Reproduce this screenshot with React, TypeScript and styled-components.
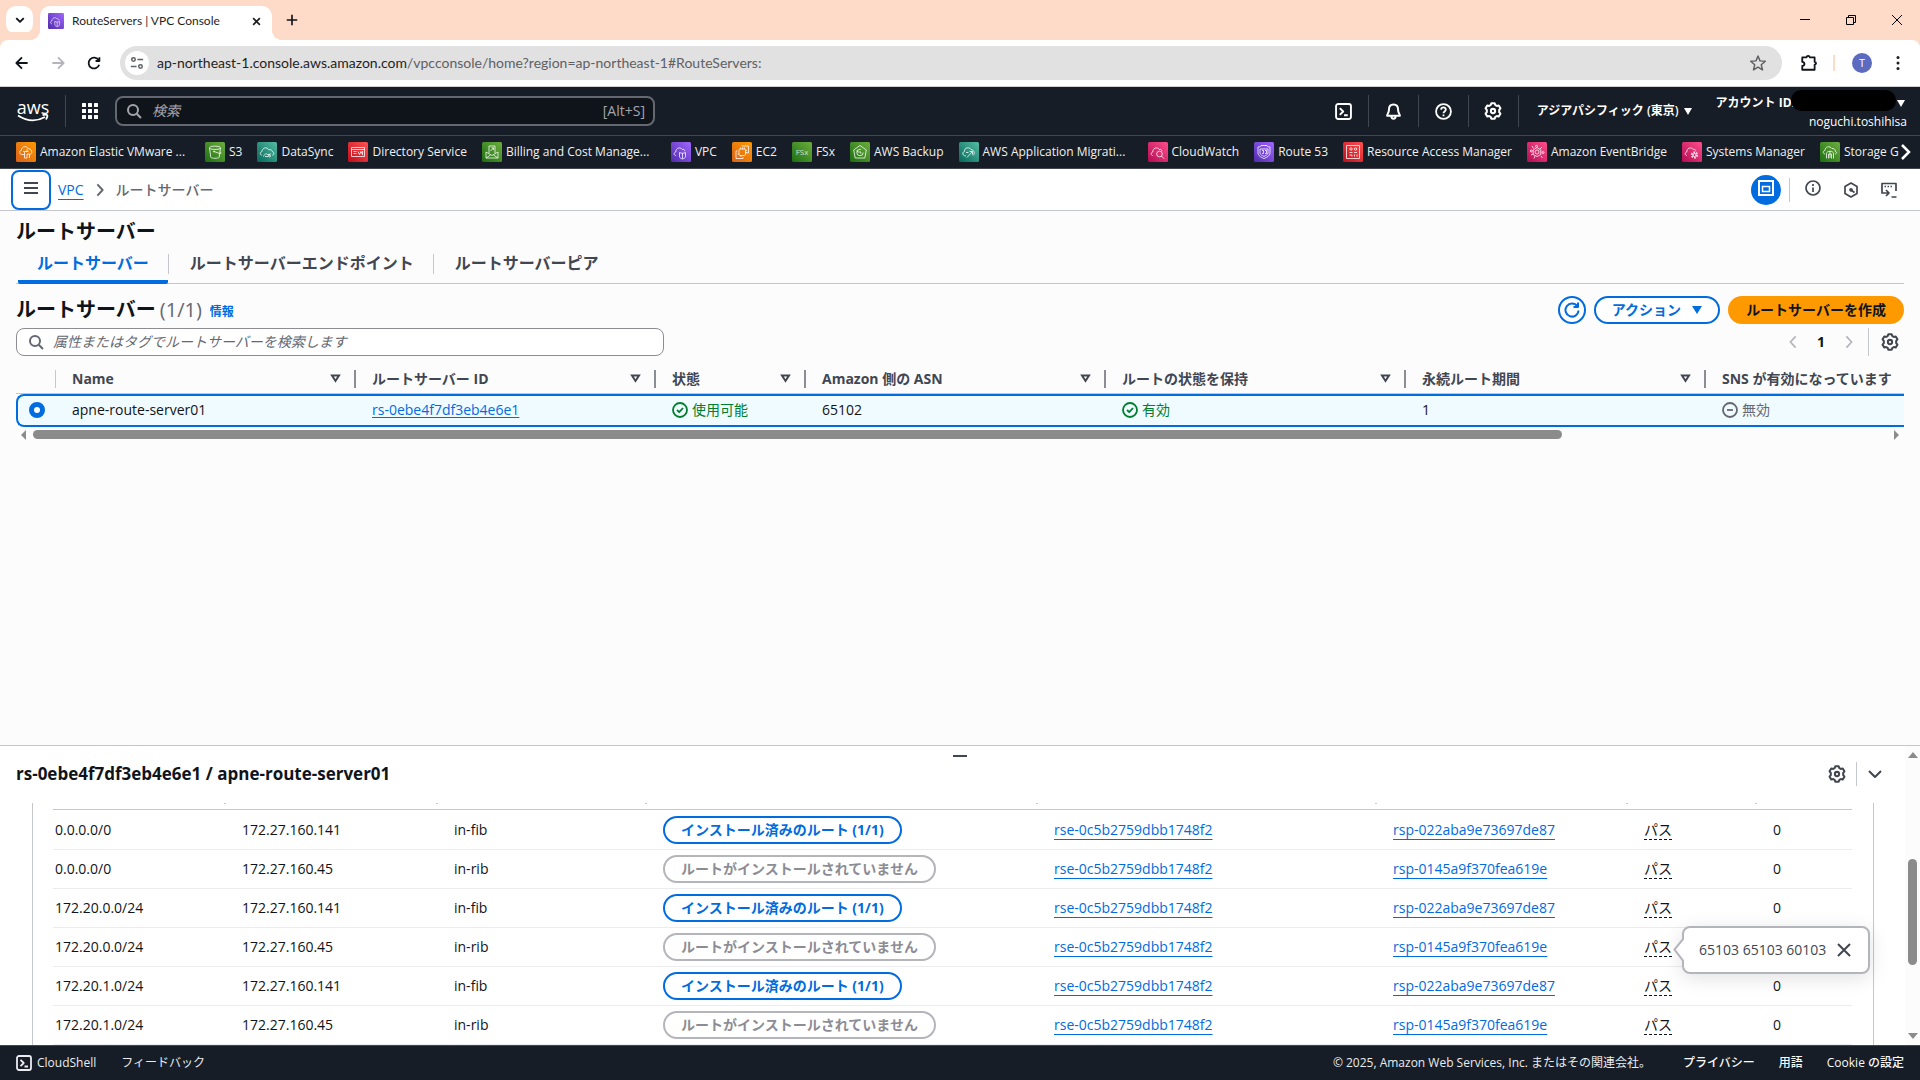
import React from 'react';
import styled, { createGlobalStyle, css } from 'styled-components';

const blue = '#006ce0';
const ink = '#0f141a';
const slate = '#424650';
const muted = '#656871';
const line = '#c6c6cd';
const night = '#161d26';

const GlobalStyle = createGlobalStyle`
  * { box-sizing: border-box; }
  body {
    margin: 0;
    color: ${ink};
    font-family: "Open Sans", "Noto Sans CJK JP", sans-serif;
    font-size: 14px;
    line-height: 20px;
    overflow: hidden;
  }
  button, input { font: inherit; color: inherit; }
  button { cursor: pointer; }
  svg { display: block; flex: none; }
`;

const Page = styled.div`
  display: flex;
  flex-direction: column;
  height: 100vh;
  background: #fcfcfd;
`;

const PlainButton = styled.button`
  display: flex;
  align-items: center;
  justify-content: center;
  flex: none;
  padding: 0;
  border: 0;
  background: none;
`;

const Subtle = styled(PlainButton)`color: ${slate};`;
const Dim = styled(PlainButton)`color: #b4b4bb;`;

/* ---------- browser window ---------- */

const TabStrip = styled.div`
  display: flex;
  align-items: flex-end;
  height: 40px;
  padding-left: 6px;
  background: #fddbc8;
  font-family: Lato, "Open Sans", sans-serif;
`;

const TabSearch = styled(PlainButton)`
  width: 27px;
  height: 28px;
  margin: 0 7px 6px 0;
  border-radius: 10px;
  background: #fff;
`;

const BrowserTab = styled.div`
  position: relative;
  display: flex;
  align-items: center;
  gap: 8px;
  width: 232px;
  height: 34px;
  padding: 0 11px 4px 8px;
  border-radius: 10px 10px 0 0;
  background: #fff;
  font-size: 12px;
  line-height: 16px;
  color: #1f1f1f;
  &::before, &::after {
    content: "";
    position: absolute;
    bottom: 0;
    width: 10px;
    height: 10px;
  }
  &::before { right: 100%; background: radial-gradient(circle at 0 0, transparent 10px, #fff 10px); }
  &::after { left: 100%; background: radial-gradient(circle at 100% 0, transparent 10px, #fff 10px); }
`;

const TabTitle = styled.span`flex: 1;`;

const NewTab = styled(PlainButton)`
  width: 28px;
  height: 28px;
  margin: 0 0 6px 6px;
`;

const WindowButtons = styled.div`
  display: flex;
  align-self: stretch;
  margin-left: auto;
`;

const WindowButton = styled(PlainButton)`width: 46px;`;

const Toolbar = styled.div`
  display: flex;
  align-items: center;
  flex: none;
  height: 47px;
  padding: 0 20px 1px 13px;
  border-bottom: 1px solid #cfd0d1;
  border-radius: 8px 8px 0 0;
  background: #fff;
  box-shadow: 0 -8px 0 #fddbc8;
`;

const NavButtons = styled.div`
  display: flex;
  gap: 18px;
  margin-right: 17px;
`;

const Address = styled.div`
  display: flex;
  align-items: center;
  flex: 1;
  height: 34px;
  padding: 0 15px 0 5px;
  border-radius: 17px;
  background: #e1e1e1;
  font-family: Lato, "Open Sans", sans-serif;
  font-size: 14px;
  color: #5f6063;
  b { font-weight: 400; color: #1f1f1f; }
`;

const SiteInfo = styled(PlainButton)`
  width: 24px;
  height: 24px;
  margin-right: 8px;
  border-radius: 50%;
  background: #fff;
`;

const Url = styled.span`flex: 1;`;

const ToolbarEnd = styled.div`
  display: flex;
  align-items: center;
  padding-left: 18px;
`;

const PeachRule = styled.span`
  width: 2px;
  height: 16px;
  margin: 0 17px 0 15px;
  background: #fddbc8;
`;

const Avatar = styled(PlainButton)`
  width: 20px;
  height: 20px;
  margin-right: 24px;
  border-radius: 50%;
  background: #5c6bc0;
  color: #fff;
  font-size: 11px;
  line-height: 20px;
`;

/* ---------- AWS header ---------- */

const Header = styled.header`
  flex: none;
  background: ${night};
  color: #fff;
  font-size: 12px;
  line-height: 18px;
  font-weight: 500;
`;

const HeaderTop = styled.div`
  display: flex;
  align-items: center;
  height: 48px;
  padding: 0 13px 0 17px;
`;

const Logo = styled.a`
  display: flex;
  flex-direction: column;
  align-items: center;
  width: 32px;
  margin-right: 16px;
  color: #fff;
  font-size: 18px;
  line-height: 14px;
  text-decoration: none;
`;

const HeaderRule = styled.span`
  flex: none;
  width: 1px;
  height: 32px;
  background: ${slate};
`;

const AppsButton = styled(PlainButton)`
  width: 49px;
  height: 32px;
  padding-right: 2px;
`;

const HeaderSearch = styled.label`
  display: flex;
  align-items: center;
  gap: 10px;
  width: 540px;
  height: 30px;
  padding: 0 8px 0 9px;
  border: 2px solid ${muted};
  border-radius: 8px;
  background: ${ink};
  font-size: 14px;
  font-weight: 400;
  color: #a4a4ad;
`;

const SearchInput = styled.input`
  flex: 1;
  min-width: 0;
  padding: 0;
  border: 0;
  outline: 0;
  background: transparent;
  &::placeholder { color: currentColor; opacity: 1; font-style: italic; }
`;

const HeaderEnd = styled.div`
  display: flex;
  align-items: center;
  margin-left: auto;
`;

const HeaderIcon = styled(PlainButton)`
  width: 49px;
  height: 32px;
`;

const Region = styled(PlainButton)`
  gap: 5px;
  margin: 0 24px 0 18px;
  font-weight: 600;
`;

const Account = styled.div`
  display: flex;
  flex-direction: column;
  align-items: flex-end;
  align-self: stretch;
  padding-top: 2px;
`;

const AccountLine = styled(PlainButton)`
  height: 20px;
  font-weight: 700;
  padding-right: 2px;
`;

const Redaction = styled.span`
  width: 105px;
  height: 21px;
  margin: -6px 0 0 -4px;
  border-radius: 10px;
  background: #000;
`;

const Caret = styled.span<{ $gap?: number }>`
  width: 0;
  height: 0;
  margin-left: ${p => p.$gap ?? 0}px;
  border: 4px solid transparent;
  border-top: 7px solid currentColor;
  border-bottom: 0;
`;

const BigCaret = styled.span`
  width: 0;
  height: 0;
  margin-left: 11px;
  border: 5px solid transparent;
  border-top: 8px solid currentColor;
  border-bottom: 0;
`;

const Favorites = styled.nav`
  display: flex;
  align-items: center;
  height: 34px;
  padding: 0 9px 0 16px;
  border: 1px solid ${slate};
  border-width: 1px 0;
`;

const FavoriteList = styled.div`
  display: flex;
  flex: 1;
  gap: 15px;
  min-width: 0;
  overflow: hidden;
`;

const Favorite = styled.a<{ $long?: boolean }>`
  display: flex;
  flex: none;
  align-items: center;
  gap: 4px;
  height: 20px;
  color: #f0f1f2;
  text-decoration: none;
  white-space: nowrap;
  ${p => p.$long && css`width: 174px;`}
`;

/* ---------- page ---------- */

const CrumbBar = styled.div`
  display: flex;
  align-items: center;
  flex: none;
  height: 42px;
  padding: 0 23px 0 11px;
  border-bottom: 1px solid ${line};
  background: #fff;
`;

const MenuButton = styled(PlainButton)`
  width: 40px;
  height: 40px;
  margin-right: 7px;
  padding-bottom: 3px;
  border: 2px solid ${blue};
  border-radius: 8px;
`;

const Crumbs = styled.div`
  display: flex;
  align-items: center;
  gap: 9px;
  color: ${muted};
  font-weight: 500;
`;

const Link = styled.a`
  color: ${blue};
  font-weight: 400;
  text-decoration: underline;
  text-underline-offset: 4px;
  text-decoration-thickness: 1px;
  text-decoration-skip-ink: none;
`;

const TightLink = styled(Link)`text-underline-offset: 2px;`;

const ToolIcons = styled.div`
  display: flex;
  align-items: center;
  margin-left: auto;
  gap: 22px;
  color: ${slate};
`;

const InfoButton = styled(PlainButton)`padding-bottom: 3px;`;

const RoundToggle = styled(PlainButton)`
  width: 30px;
  height: 30px;
  padding-bottom: 3px;
  border-radius: 50%;
  background: ${blue};
`;

const Rule = styled.span<{ $h: number }>`
  width: 1px;
  height: ${p => p.$h}px;
  background: ${line};
`;

const ToggleGroup = styled.div`
  display: flex;
  align-items: center;
  gap: 8px;
  margin-right: -7px;
`;

const Main = styled.main`
  flex: 1;
  min-height: 0;
  padding: 9px 16px 0;
`;

const Title = styled.h1`
  margin: 0;
  font-size: 20px;
  line-height: 24px;
  font-weight: 700;
`;

const Tabs = styled.div`
  display: flex;
  align-items: center;
  height: 40px;
  border-bottom: 1px solid ${line};
`;

const Tab = styled.button<{ $active?: boolean }>`
  height: 40px;
  margin-left: 2px;
  padding: 3px 19px 0;
  border: 0;
  border-bottom: 4px solid ${p => (p.$active ? blue : 'transparent')};
  border-radius: 2px;
  background: none;
  font-size: 16px;
  font-weight: 700;
  color: ${p => (p.$active ? blue : slate)};
`;

const ListHeader = styled.div`
  display: flex;
  align-items: center;
  gap: 8px;
  height: 28px;
  margin-top: 12px;
`;

const Heading = styled.h2`
  margin: 0;
  font-size: 20px;
  line-height: 24px;
  font-weight: 700;
  span { font-weight: 400; color: ${muted}; margin-left: 4px; }
`;

const InfoLink = styled.a`
  flex: 1;
  padding-top: 4px;
  color: ${blue};
  font-size: 12px;
  font-weight: 700;
  text-decoration: none;
`;

const Pill = styled.button<{ $kind?: 'primary' | 'icon' }>`
  display: inline-flex;
  align-items: center;
  justify-content: center;
  height: 28px;
  padding: 0 16px;
  border: 2px solid ${blue};
  border-radius: 14px;
  background: #fff;
  color: ${blue};
  font-weight: 700;
  white-space: nowrap;
  &:disabled { border-color: #b4b4bb; color: #8c8c94; }
  ${p => p.$kind === 'primary' && css`border-color: #ff9900; background: #ff9900; color: ${ink};`}
  ${p => p.$kind === 'icon' && css`width: 28px; padding: 0;`}
`;

const FilterRow = styled.div`
  display: flex;
  align-items: center;
  justify-content: space-between;
  margin-top: 4px;
`;

const Filter = styled.label`
  display: flex;
  align-items: center;
  gap: 9px;
  width: 648px;
  height: 28px;
  padding: 0 11px;
  border: 1px solid #8c8c94;
  border-radius: 8px;
  background: #fff;
  color: ${muted};
`;

const Pager = styled.div`
  display: flex;
  align-items: center;
  gap: 12px;
  padding-right: 5px;
`;

const PageNumbers = styled.div`
  display: flex;
  align-items: center;
  gap: 17px;
  font-weight: 700;
`;

const TableFrame = styled.div`
  margin-top: 8px;
  overflow: hidden;
`;

const ServerTable = styled.table`
  width: 100%;
  min-width: 1888px;
  border-spacing: 0;
  table-layout: fixed;
  text-align: left;
  th {
    height: 30px;
    padding: 0;
    border-bottom: 1px solid ${line};
    color: ${slate};
    font-weight: 700;
  }
  td {
    height: 33px;
    padding: 0 0 1px 16px;
    border: 2px solid ${blue};
    border-width: 2px 0;
    background: #f0fbff;
  }
  td:first-child {
    padding-left: 11px;
    border-left-width: 2px;
    border-radius: 8px 0 0 8px;
  }
`;

const HeadCell = styled.div<{ $first?: boolean; $last?: boolean }>`
  display: flex;
  align-items: center;
  justify-content: space-between;
  height: 18px;
  padding: 0 13px 0 16px;
  border-right: 2px solid #8c8c94;
  white-space: nowrap;
  ${p => p.$first && css`border-right: 1px solid ${line};`}
  ${p => p.$last && css`border-right: 0;`}
`;

const Radio = styled.input`
  appearance: none;
  display: block;
  width: 16px;
  height: 16px;
  margin: 0;
  border: 5px solid ${blue};
  border-radius: 50%;
  background: #fff;
`;

const Status = styled.span<{ $off?: boolean }>`
  display: flex;
  align-items: center;
  gap: 4px;
  color: ${p => (p.$off ? muted : '#00802f')};
`;

const HScroll = styled.div`
  display: flex;
  align-items: center;
  height: 15px;
  padding: 0 5px;
  color: #8b8b8b;
`;

const HTrack = styled.div`
  flex: 1;
  margin: 0 8px 0 7px;
`;

const HThumb = styled.div`
  width: 82.5%;
  height: 9px;
  border-radius: 5px;
  background: #8b8b8b;
`;

/* ---------- split panel ---------- */

const Panel = styled.section`
  display: flex;
  flex: none;
  height: 300px;
  border-top: 1px solid #c6c6c6;
  background: #fff;
`;

const PanelMain = styled.div`
  display: flex;
  flex-direction: column;
  flex: 1;
  min-width: 0;
`;

const PanelHead = styled.div`
  display: grid;
  grid-template-rows: 9px 2px 46px;
  justify-items: center;
  flex: none;
  height: 57px;
`;

const Grip = styled.span`
  grid-row: 2;
  width: 14px;
  height: 2px;
  margin-left: 15px;
  background: ${slate};
`;

const PanelTitleRow = styled.div`
  grid-row: 3;
  justify-self: stretch;
  display: flex;
  align-items: center;
  justify-content: space-between;
  height: 34px;
  padding: 0 22px 0 16px;
`;

const PanelTitle = styled.h2`
  margin: 0;
  font-size: 17px;
  line-height: 24px;
  font-weight: 700;
`;

const PanelTools = styled.div`
  display: flex;
  align-items: center;
  gap: 10px;
`;

const PanelBody = styled.div`
  flex: 1;
  min-height: 0;
  margin: 0 31px 0 32px;
  padding: 0 21px 0 20px;
  border: 1px solid ${line};
  border-width: 0 1px;
`;

const RouteTable = styled.table`
  width: 100%;
  border-spacing: 0;
  table-layout: fixed;
  text-align: left;
  th {
    height: 7px;
    padding: 0;
    border-bottom: 1px solid ${line};
  }
  td {
    height: 39px;
    padding: 0 0 0 16px;
    border-bottom: 1px solid #ebebf0;
    white-space: nowrap;
  }
  td:first-child { padding-left: 2px; }
  tbody tr:first-child td { height: 40px; }
`;

const Tick = styled.div`
  height: 1px;
  margin-bottom: 5px;
  border-right: 2px solid ${line};
`;

const PathCell = styled.div`
  position: relative;
  display: inline-block;
`;

const PathButton = styled.button`
  padding: 0;
  border: 0;
  border-bottom: 1px dashed ${ink};
  background: none;
  line-height: 18px;
  display: block;
`;

const Popover = styled.div`
  position: absolute;
  z-index: 2;
  left: 38px;
  top: -12px;
  display: flex;
  align-items: center;
  justify-content: space-between;
  width: 188px;
  height: 48px;
  padding: 0 16px 0 15px;
  border: 2px solid #b4b4bb;
  border-radius: 8px;
  background: #fff;
  color: ${slate};
  box-shadow: 0 4px 20px rgba(0, 7, 22, 0.12);
`;

const PopoverArrow = styled.svg`
  position: absolute;
  left: -11px;
  top: 9px;
`;

const VScroll = styled.div`
  display: flex;
  flex-direction: column;
  align-items: center;
  justify-content: space-between;
  flex: none;
  width: 15px;
  padding: 6px 0;
  background: #fcfcfc;
  color: #8b8b8b;
`;

const VTrack = styled.div`
  flex: 1;
  padding-top: 101px;
`;

const VThumb = styled.div`
  width: 9px;
  height: 106px;
  border-radius: 5px;
  background: #8b8b8b;
`;

const Footer = styled.footer`
  display: flex;
  align-items: center;
  flex: none;
  height: 35px;
  padding: 0 16px;
  border-top: 1px solid ${slate};
  background: ${night};
  color: #ebebf0;
  font-size: 12px;
  a { color: #f9f9fa; text-decoration: none; font-weight: 500; margin-left: 24px; }
`;

const ShellButton = styled(PlainButton)`
  gap: 5px;
  margin-right: 25px;
`;

const Copyright = styled.span`margin: 0 8px 0 auto;`;

/* ---------- icons ---------- */

type IconProps = { size?: number; sw?: number; children: React.ReactNode };
const Icon = ({ size = 16, sw = 2, children }: IconProps) => (
  <svg width={size} height={size} viewBox="0 0 16 16" fill="none" stroke="currentColor" strokeWidth={sw} strokeLinejoin="round" aria-hidden="true">
    {children}
  </svg>
);

const Magnifier = () => (
  <Icon><circle cx="7" cy="7" r="5" /><path d="M10.7 10.7 15 15" /></Icon>
);
const Gear = () => (
  <Icon size={18} sw={1.8}>
    <path d="M6.5 1.2h3l.6 1.6 1.300.7 1.700-.4 1.500 2.500-1.100 1.400v2l1.100 1.400-1.500 2.500-1.700-.4-1.300.7-.6 1.600h-3l-.6-1.600-1.300-.7-1.700.4-1.500-2.500L2.500 9V7L1.400 5.600l1.500-2.500 1.700.4 1.300-.7z" />
    <circle cx="8" cy="8" r="1.900" />
  </Icon>
);
const Shell = ({ size = 17 }: { size?: number }) => (
  <Icon size={size} sw={1.8}><rect x="1" y="1" width="14" height="14" rx="2" /><path d="M4.500 4.800 7.700 8l-3.200 3.200M8.500 11.500h3.500" /></Icon>
);
const Check = () => (
  <Icon sw={1.8}><circle cx="8" cy="8" r="7" /><path d="m5 8 2.200 2.200L11 6" /></Icon>
);
const Minus = () => (
  <Icon sw={1.8}><circle cx="8" cy="8" r="7" /><path d="M5 8h6" /></Icon>
);
const chevrons = {
  left: 'M11 1.500 5 8l6 6.500',
  right: 'M5 1.500 11 8l-6 6.500',
  down: 'M2 5l6 6 6-6',
};
const Chevron = ({ dir, size = 16, sw = 2 }: { dir: keyof typeof chevrons; size?: number; sw?: number }) => (
  <Icon size={size} sw={sw}><path d={chevrons[dir]} /></Icon>
);
const SortArrow = () => (
  <svg width="11" height="9" viewBox="0 0 11 9" fill="none" stroke="currentColor" strokeWidth="2" aria-hidden="true"><path d="M2 1.500h7L5.500 7z" /></svg>
);
const Cross = ({ size = 16, sw = 2 }: { size?: number; sw?: number }) => (
  <Icon size={size} sw={sw}><path d="m2 2 12 12M14 2 2 14" /></Icon>
);
const Tri = ({ d, w, h }: { d: string; w: number; h: number }) => (
  <svg width={w} height={h} viewBox="0 0 10 10" preserveAspectRatio="none" fill="currentColor" aria-hidden="true"><path d={d} /></svg>
);

const palettes = {
  orange: ['#d9621b', '#ff9900'],
  green: ['#1e6e13', '#6cae3e'],
  teal: ['#06685a', '#54bca4'],
  red: ['#c00d1c', '#ff5252'],
  purple: ['#4f2cab', '#a166ff'],
  pink: ['#b30b53', '#ff4f8b'],
};
type Palette = keyof typeof palettes;

const cloud = 'M5 13.500H4.600C2.800 13.300 2.600 10.400 4.800 10 4.600 6 9.500 4.500 11.200 7.500c1.500-.8 2.700.4 2.600 1.800';

const glyphs: Record<string, React.ReactNode> = {
  vmware: <><path d="M6 12.500c-3 0-3-4-.5-4.300C5.500 4 11 3.500 12.300 6.800c2.200-.2 3.800 1.600 3.500 3.500-.2 1.300-1 2-2.300 2.200" /><path d="M7 9.500h5.500M8.500 9.500V16M8.500 16h2.500v-4h2.500v4M6 12.500h2.500M11 7v2.500" /></>,
  s3: <><ellipse cx="10" cy="5.800" rx="5.500" ry="1.700" /><path d="m4.500 5.800 1.300 9.500c.8 1.300 7.600 1.300 8.400 0l1.300-9.500M9 9.500l5.500 2c2 .5 2-.8.6-1.600" /><circle cx="9" cy="9.500" r=".6" /></>,
  datasync: <><path d="M4.800 13.200C2.500 12.700 3 9.800 5 9.600 5 5.500 10.200 4.500 11.800 7.800c2-.6 3.500.6 3.700 2 2 .5 1.800 3.200-.3 3.400" /><path d="M6.500 14.500c1-3 3-3 4-2s2 .5 3-.8M11 12.300h2.500M8 14.500h3" /><circle cx="12.500" cy="14" r="1" /></>,
  directory: <><rect x="3.500" y="5.500" width="13" height="9" /><path d="M3.500 7.500h13M5.500 9.500h3M5.500 11.500h3M10 9.500l1.500 3 1.500-3 1.500 3M14.500 9v4" /></>,
  billing: <><path d="M4 10v6h12v-6l-6 3.500zM4 16l4.500-3M16 16l-4.500-3M7 11V4h6v7M8.500 9l3-3M9.500 5.800h2v2" /></>,
  vpc: <><path d={cloud} /><path d="M8.500 10.500c2 1 4 1 6 0v4.200c0 1-1.500 1.800-3 2.300-1.500-.5-3-1.300-3-2.300zM11.500 11.200v5.500" /></>,
  ec2: <><rect x="7" y="7" width="6.500" height="6.500" rx="1" /><path d="M9.500 4h7v7h-2M5.500 9H4v7.500h7V15M8.500 7V5.500M10.500 7V5.500M12.300 7V5.500M13.500 8.500H15M13.500 10.500H15M7 12H5.500M9 13.500V15" /></>,
  fsx: <text x="10" y="13" textAnchor="middle" fontSize="8" fill="#fff" fillOpacity=".75" stroke="none">FSx</text>,
  backup: <><path d="m10 3.500 6.300 4.500-1.500 8H5.200L3.700 8z" /><circle cx="10" cy="10.500" r="3.200" strokeDasharray="16 4" /><path d="M10 9v2h1.500M7 8l.5 2H9" /></>,
  migration: <><path d="M7 14c-4 0-4-4-1.500-4.500C5 5.500 10.500 4.500 12 7.500c3 0 4.500 4 2 6" /><path d="m8 15.500 5.500-6M10.500 9.500h3v3M7 10.500h2.500" /></>,
  watch: <><path d={cloud} /><circle cx="11.500" cy="12" r="2.800" /><path d="m13.500 14 2.500 2.700" /></>,
  route: <><path d="M4 5c2 0 3-.5 3-1.500h6c0 1 1 1.500 3 1.500v6c0 2.500-3 4.500-6 5.500-3-1-6-3-6-5.500z" /><path d="M6 7h8v4c0 1.500-2 2.500-4 3.300C8 13.500 6 12.500 6 11zM8 8.500h1.500v3H8M11 8.500h1.500v3H11" /></>,
  ram: <><rect x="3.500" y="3.500" width="13" height="13" /><circle cx="8" cy="7" r="1.200" /><circle cx="12.500" cy="7" r="1.200" /><path d="M6.500 10.500h3M11 10.500h3M6.500 13h2.500v1.500M11.500 12.500v2M14 12.500v2" /></>,
  bridge: <><circle cx="10" cy="10" r="2" /><path d="M10 5.500 13.800 8v4.500L10 14.500l-3.800-2V8zM5 4l1.500 2.500M15 5l-2 2M4 13l2-1M14 14l1.500 2M8 14l-1 2.500" /><circle cx="9.500" cy="4.300" r="1" /><circle cx="16" cy="10.500" r="1" /><circle cx="4.300" cy="9" r="1" /></>,
  systems: <><path d={cloud} /><circle cx="12.500" cy="13" r="2.600" strokeDasharray="1.700 1" strokeWidth="2" /><circle cx="12.500" cy="13" r="1.500" /></>,
  storage: <><path d="M5 12C2.500 11.500 3 8.800 5 8.500 5 4.500 10 3.500 11.800 6.500c2.200-.4 3.700 1.300 3.500 2.800 1.500.5 1.500 2.200 0 2.700" /><path d="M6.500 16.500v-5c0-3 7-3 7 0v5M8.500 16.500v-4.500h3v4.500M10 9v7" /></>,
};

const ServiceIcon = ({ glyph, tone, size = 20 }: { glyph: string; tone: Palette; size?: number }) => {
  const id = `grad-${glyph}-${size}`;
  return (
    <svg width={size} height={size} viewBox="0 0 20 20" fill="none" stroke="#fff" strokeOpacity=".85" strokeWidth=".9" strokeLinejoin="round" aria-hidden="true">
      <defs>
        <linearGradient id={id} x1="0" y1="1" x2="1" y2="0">
          <stop offset="0" stopColor={palettes[tone][0]} />
          <stop offset="1" stopColor={palettes[tone][1]} />
        </linearGradient>
      </defs>
      <rect width="20" height="20" rx="1.500" fill={`url(#${id})`} stroke="none" />
      {glyphs[glyph]}
    </svg>
  );
};

/* ---------- data ---------- */

const favorites: { name: string; glyph: string; tone: Palette; long?: boolean }[] = [
  { name: 'Amazon Elastic VMware ...', glyph: 'vmware', tone: 'orange', long: true },
  { name: 'S3', glyph: 's3', tone: 'green' },
  { name: 'DataSync', glyph: 'datasync', tone: 'teal' },
  { name: 'Directory Service', glyph: 'directory', tone: 'red' },
  { name: 'Billing and Cost Manage...', glyph: 'billing', tone: 'green', long: true },
  { name: 'VPC', glyph: 'vpc', tone: 'purple' },
  { name: 'EC2', glyph: 'ec2', tone: 'orange' },
  { name: 'FSx', glyph: 'fsx', tone: 'green' },
  { name: 'AWS Backup', glyph: 'backup', tone: 'green' },
  { name: 'AWS Application Migrati...', glyph: 'migration', tone: 'teal', long: true },
  { name: 'CloudWatch', glyph: 'watch', tone: 'pink' },
  { name: 'Route 53', glyph: 'route', tone: 'purple' },
  { name: 'Resource Access Manager', glyph: 'ram', tone: 'red' },
  { name: 'Amazon EventBridge', glyph: 'bridge', tone: 'pink' },
  { name: 'Systems Manager', glyph: 'systems', tone: 'pink' },
  { name: 'Storage G', glyph: 'storage', tone: 'green' },
];

const serverColumns = ['Name', 'ルートサーバー ID', '状態', 'Amazon 側の ASN', 'ルートの状態を保持', '永続ルート期間', 'SNS が有効になっています'];
const serverWidths = [40, 300, 300, 150, 300, 300, 300];

const openPath = 3;
const prefixes = ['0.0.0.0/0', '172.20.0.0/24', '172.20.1.0/24'];
const routes = prefixes.flatMap(prefix => [
  { prefix, hop: '172.27.160.141', state: 'in-fib', installed: true, peer: 'rsp-022aba9e73697de87' },
  { prefix, hop: '172.27.160.45', state: 'in-rib', installed: false, peer: 'rsp-0145a9f370fea619e' },
]);
const routeWidths = [173, 212, 209, 391, 339, 251, 129];

/* ---------- app ---------- */

export default function App() {
  return (
    <Page>
      <GlobalStyle />

      <TabStrip>
        <TabSearch aria-label="タブを検索"><Chevron dir="down" size={10} sw={3} /></TabSearch>
        <BrowserTab>
          <ServiceIcon glyph="vpc" tone="purple" size={16} />
          <TabTitle>RouteServers | VPC Console</TabTitle>
          <PlainButton aria-label="タブを閉じる"><Cross size={9} sw={3} /></PlainButton>
        </BrowserTab>
        <NewTab aria-label="新しいタブ"><Icon size={12} sw={2.2}><path d="M8 1v14M1 8h14" /></Icon></NewTab>
        <WindowButtons>
          <WindowButton aria-label="最小化"><svg width="10" height="10" stroke="#000"><path d="M0 4.500h10" /></svg></WindowButton>
          <WindowButton aria-label="元に戻す"><svg width="10" height="10" stroke="#000" fill="none"><path d="M.5 2.500h7v7h-7zM2.500 2V.5h7v7H8" /></svg></WindowButton>
          <WindowButton aria-label="閉じる"><svg width="10" height="10" stroke="#000"><path d="m0 0 10 10M10 0 0 10" /></svg></WindowButton>
        </WindowButtons>
      </TabStrip>

      <Toolbar>
        <NavButtons>
          <PlainButton aria-label="戻る"><Icon size={18} sw={1.6}><path d="M13 8H3.500M8 3 3 8l5 5" /></Icon></PlainButton>
          <Dim aria-label="進む" disabled><Icon size={18} sw={1.6}><path d="M3 8h9.500M8 3l5 5-5 5" /></Icon></Dim>
          <PlainButton aria-label="再読み込み"><Icon size={18} sw={1.6}><path d="M12.600 9.500A4.800 4.800 0 1 1 12 5.300M12.800 2.800v3.400H9.400" /></Icon></PlainButton>
        </NavButtons>
        <Address>
          <SiteInfo aria-label="サイト情報">
            <Icon size={14} sw={1.7}><circle cx="4" cy="4" r="2" /><path d="M8.500 4H15M1 12h6.500" /><circle cx="12" cy="12" r="2" /></Icon>
          </SiteInfo>
          <Url><b>ap-northeast-1.console.aws.amazon.com</b>/vpcconsole/home?region=ap-northeast-1#RouteServers:</Url>
          <PlainButton aria-label="ブックマーク">
            <Icon size={18} sw={1.3}><path d="m8 1.800 1.800 4.300 4.700.4-3.600 3.100 1.100 4.600L8 11.700l-4 2.500 1.100-4.600L1.500 6.500l4.700-.4z" /></Icon>
          </PlainButton>
        </Address>
        <ToolbarEnd>
          <PlainButton aria-label="拡張機能">
            <Icon size={18} sw={1.6}><path d="M2 3h3.800C6 1.300 8.500 1.300 8.700 3H13v4c1.700.2 1.700 2.300 0 2.500V14H2v-3.400c2.600-.4 2.600-3.200 0-3.600z" /></Icon>
          </PlainButton>
          <PeachRule />
          <Avatar aria-label="プロファイル">T</Avatar>
          <PlainButton aria-label="メニュー">
            <svg width="4" height="16" fill="#1f1f1f"><circle cx="2" cy="2.500" r="1.500" /><circle cx="2" cy="8" r="1.500" /><circle cx="2" cy="13.500" r="1.500" /></svg>
          </PlainButton>
        </ToolbarEnd>
      </Toolbar>

      <Header>
        <HeaderTop>
          <Logo href="#">
            aws
            <svg width="32" height="8" viewBox="0 0 32 8" fill="none" stroke="#fff" strokeWidth="1.800">
              <path d="M1 1.500c9 6 19 6 27 1.500M25.500 1.200c2-.6 4-.5 4.700 0 .4.600 0 2.800-1.400 4.300" />
            </svg>
          </Logo>
          <HeaderRule />
          <AppsButton aria-label="サービス">
            <svg width="16" height="16" fill="#fff">
              {[0, 6, 12].flatMap(x => [0, 6, 12].map(y => <rect key={`${x}-${y}`} x={x} y={y} width="4" height="4" rx=".5" />))}
            </svg>
          </AppsButton>
          <HeaderSearch>
            <Magnifier />
            <SearchInput placeholder="検索" aria-label="検索" />
            [Alt+S]
          </HeaderSearch>
          <HeaderEnd>
            <HeaderIcon aria-label="CloudShell"><Shell /></HeaderIcon>
            <HeaderRule />
            <HeaderIcon aria-label="通知">
              <Icon size={17} sw={1.9}><path d="M8 1.500c-3 0-4.300 2-4.300 4.800 0 3-1.700 4-1.700 5.700h12c0-1.700-1.700-2.700-1.700-5.700C12.300 3.500 11 1.500 8 1.500zM6 12.500c0 3 4 3 4 0" /></Icon>
            </HeaderIcon>
            <HeaderRule />
            <HeaderIcon aria-label="サポート">
              <Icon size={17} sw={1.7}><circle cx="8" cy="8" r="7" /><path d="M5.800 6.300c0-2.800 4.400-2.800 4.400-.1C10.200 8 8 7.900 8 9.600M8 10.800v1.600" /></Icon>
            </HeaderIcon>
            <HeaderRule />
            <HeaderIcon aria-label="設定"><Gear /></HeaderIcon>
            <HeaderRule />
            <Region>アジアパシフィック (東京)<Caret /></Region>
            <Account>
              <AccountLine>アカウント ID:<Redaction /><Caret $gap={1} /></AccountLine>
              noguchi.toshihisa
            </Account>
          </HeaderEnd>
        </HeaderTop>
        <Favorites>
          <FavoriteList>
            {favorites.map(f => (
              <Favorite key={f.name} href="#" $long={f.long}><ServiceIcon glyph={f.glyph} tone={f.tone} />{f.name}</Favorite>
            ))}
          </FavoriteList>
          <PlainButton aria-label="次へ">
            <svg width="11" height="16" fill="none" stroke="#fff" strokeWidth="2.500"><path d="m2 1 7 7-7 7" /></svg>
          </PlainButton>
        </Favorites>
      </Header>

      <CrumbBar>
        <MenuButton aria-label="ナビゲーションを開く">
          <svg width="14" height="14" stroke={slate} strokeWidth="2"><path d="M0 2h14M0 7h14M0 12h14" /></svg>
        </MenuButton>
        <Crumbs>
          <Link href="#">VPC</Link>
          <Chevron dir="right" size={14} sw={2.2} />
          <span>ルートサーバー</span>
        </Crumbs>
        <ToolIcons>
          <ToggleGroup>
            <RoundToggle aria-label="分割パネル">
              <svg width="16" height="16" fill="none" stroke="#fff" strokeWidth="2"><path d="M1 1h14v14H1z" /><path d="M4.500 6.500h7v5h-7z" strokeWidth="1.500" /></svg>
            </RoundToggle>
            <Rule $h={24} />
          </ToggleGroup>
          <InfoButton aria-label="情報"><Icon sw={1.7}><circle cx="8" cy="8" r="7" /><path d="M8 4v2M8 7.500V12" /></Icon></InfoButton>
          <PlainButton aria-label="Amazon Q">
            <Icon sw={1.7}><path d="m8 1 6 3.500v7L8 15l-6-3.500v-7z" /><path d="m8 8 3.500 2.500" /><circle cx="8" cy="7.800" r="1" /></Icon>
          </PlainButton>
          <PlainButton aria-label="ターミナル">
            <Icon sw={1.7}><path d="M15 9V1.500H1V11h6M3.500 4.500h1.500M6.500 4.500H8M9.500 4.500H11M5 8l3 3-3 3M10.500 15h5" /></Icon>
          </PlainButton>
        </ToolIcons>
      </CrumbBar>

      <Main>
        <Title>ルートサーバー</Title>
        <Tabs role="tablist">
          <Tab role="tab" aria-selected $active>ルートサーバー</Tab>
          <Rule $h={20} />
          <Tab role="tab">ルートサーバーエンドポイント</Tab>
          <Rule $h={20} />
          <Tab role="tab">ルートサーバーピア</Tab>
        </Tabs>

        <ListHeader>
          <Heading>ルートサーバー<span>(1/1)</span></Heading>
          <InfoLink href="#">情報</InfoLink>
          <Pill $kind="icon" aria-label="更新"><Icon sw={2}><path d="M14.500 8.500A6.500 6.500 0 1 1 13.300 4.300M14 .5V5H9.500" /></Icon></Pill>
          <Pill>アクション<BigCaret /></Pill>
          <Pill $kind="primary">ルートサーバーを作成</Pill>
        </ListHeader>

        <FilterRow>
          <Filter>
            <Magnifier />
            <SearchInput placeholder="属性またはタグでルートサーバーを検索します" aria-label="ルートサーバーを検索" />
          </Filter>
          <Pager>
            <PageNumbers>
              <Dim aria-label="前のページ" disabled><Chevron dir="left" size={14} /></Dim>
              1
              <Dim aria-label="次のページ" disabled><Chevron dir="right" size={14} /></Dim>
            </PageNumbers>
            <Rule $h={28} />
            <Subtle aria-label="設定"><Gear /></Subtle>
          </Pager>
        </FilterRow>

        <TableFrame>
          <ServerTable>
            <colgroup>{serverWidths.map((w, i) => <col key={i} width={w} />)}<col /></colgroup>
            <thead>
              <tr>
                <th><HeadCell $first /></th>
                {serverColumns.map((c, i) => {
                  const last = i === serverColumns.length - 1;
                  return <th key={c}><HeadCell $last={last}>{c}{!last && <SortArrow />}</HeadCell></th>;
                })}
              </tr>
            </thead>
            <tbody>
              <tr>
                <td><Radio type="radio" name="server" defaultChecked aria-label="apne-route-server01" /></td>
                <td>apne-route-server01</td>
                <td><TightLink href="#">rs-0ebe4f7df3eb4e6e1</TightLink></td>
                <td><Status><Check />使用可能</Status></td>
                <td>65102</td>
                <td><Status><Check />有効</Status></td>
                <td>1</td>
                <td><Status $off><Minus />無効</Status></td>
              </tr>
            </tbody>
          </ServerTable>
        </TableFrame>
        <HScroll>
          <Tri w={5} h={10} d="M10 0v10L0 5z" />
          <HTrack><HThumb /></HTrack>
          <Tri w={5} h={10} d="M0 0v10l10-5z" />
        </HScroll>
      </Main>

      <Panel>
        <PanelMain>
          <PanelHead>
            <Grip />
            <PanelTitleRow>
              <PanelTitle>rs-0ebe4f7df3eb4e6e1 / apne-route-server01</PanelTitle>
              <PanelTools>
                <Subtle aria-label="パネルの設定"><Gear /></Subtle>
                <Rule $h={24} />
                <Subtle aria-label="パネルを閉じる"><Chevron dir="down" /></Subtle>
              </PanelTools>
            </PanelTitleRow>
          </PanelHead>
          <PanelBody>
            <RouteTable>
              <colgroup>{routeWidths.map((w, i) => <col key={i} width={w} />)}<col /></colgroup>
              <thead>
                <tr>{routeWidths.map((w, i) => <th key={i}><Tick /></th>)}<th /></tr>
              </thead>
              <tbody>
                {routes.map((r, i) => (
                  <tr key={i}>
                    <td>{r.prefix}</td>
                    <td>{r.hop}</td>
                    <td>{r.state}</td>
                    <td>{r.installed ? <Pill>インストール済みのルート (1/1)</Pill> : <Pill disabled>ルートがインストールされていません</Pill>}</td>
                    <td><Link href="#">rse-0c5b2759dbb1748f2</Link></td>
                    <td><Link href="#">{r.peer}</Link></td>
                    <td>
                      <PathCell>
                        <PathButton>パス</PathButton>
                        {i === openPath && (
                          <Popover role="dialog">
                            <PopoverArrow width="11" height="26" viewBox="0 0 11 26">
                              <path d="M11 1 1.500 12.500 11 25" fill="#fff" stroke="#b4b4bb" strokeWidth="2" />
                            </PopoverArrow>
                            65103 65103 60103
                            <PlainButton aria-label="閉じる"><Cross /></PlainButton>
                          </Popover>
                        )}
                      </PathCell>
                    </td>
                    <td>{i !== openPath && '0'}</td>
                  </tr>
                ))}
              </tbody>
            </RouteTable>
          </PanelBody>
        </PanelMain>
        <VScroll>
          <Tri w={10} h={6} d="M0 10h10L5 0z" />
          <VTrack><VThumb /></VTrack>
          <Tri w={10} h={6} d="M0 0h10L5 10z" />
        </VScroll>
      </Panel>

      <Footer>
        <ShellButton><Shell size={16} />CloudShell</ShellButton>
        <PlainButton>フィードバック</PlainButton>
        <Copyright>© 2025, Amazon Web Services, Inc. またはその関連会社。</Copyright>
        <a href="#">プライバシー</a>
        <a href="#">用語</a>
        <a href="#">Cookie の設定</a>
      </Footer>
    </Page>
  );
}
